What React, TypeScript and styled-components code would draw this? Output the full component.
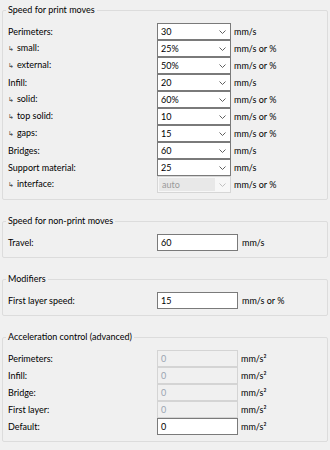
import React from "react";
import styled, { createGlobalStyle } from "styled-components";

const GlobalStyle = createGlobalStyle`
  html, body {
    margin: 0;
    padding: 0;
    background: #f0f0f0;
  }
  body {
    font-family: "Lato", "Noto Sans", sans-serif;
    font-size: 9px;
    color: #000;
  }
`;

const Page = styled.div`
  width: 330px;
  height: 450px;
  box-sizing: border-box;
  padding: 4px 2px 0 2px;
  display: flex;
  flex-direction: column;
  gap: 15px;
  overflow: hidden;
`;

const Group = styled.fieldset`
  margin: 0;
  border: 1px solid #dcdcdc;
  border-radius: 2px;
  padding: 7px 4px 6px 5px;
  min-width: 0;
`;

const Legend = styled.legend`
  font-size: 9px;
  line-height: 12px;
  height: 12px;
  padding: 0 2px;
  margin-left: -2px;
  color: #000;
`;

const Rows = styled.div`
  display: flex;
  flex-direction: column;
`;

const Row = styled.div`
  display: grid;
  grid-template-columns: 149px auto 1fr;
  align-items: center;
  height: 17px;
`;

const Label = styled.span`
  line-height: 12px;
  white-space: nowrap;
`;

const Sub = styled.span`
  font-family: "DejaVu Sans", sans-serif;
  font-size: 7px;
  color: #444;
  margin-right: 3px;
`;

const Combo = styled.div<{ $disabled?: boolean }>`
  box-sizing: border-box;
  width: 74px;
  height: 17px;
  border: 1px solid ${(p) => (p.$disabled ? "#d6d6d6" : "#7a7a7a")};
  background: ${(p) => (p.$disabled ? "#f7f7f7" : "#ffffff")};
  display: flex;
  align-items: stretch;
`;

const ComboText = styled.span<{ $disabled?: boolean }>`
  flex: 1;
  display: flex;
  align-items: center;
  padding-left: 3px;
  margin: ${(p) => (p.$disabled ? "1px 0 1px 1px" : "0")};
  background: ${(p) => (p.$disabled ? "#e8e8e8" : "transparent")};
  color: ${(p) => (p.$disabled ? "#9a9a9a" : "#000")};
`;

const ComboArrow = styled.span`
  width: 15px;
  display: flex;
  align-items: center;
  justify-content: center;
`;

const TextBox = styled.div<{ $disabled?: boolean }>`
  box-sizing: border-box;
  width: 81px;
  height: 17px;
  border: 1px solid ${(p) => (p.$disabled ? "#d4d4d4" : "#7a7a7a")};
  background: ${(p) => (p.$disabled ? "#f0f0f0" : "#ffffff")};
  color: ${(p) => (p.$disabled ? "#9aa4b0" : "#000")};
  display: flex;
  align-items: center;
  padding-left: 3px;
`;

const Unit = styled.span<{ $gap?: number }>`
  margin-left: ${(p) => p.$gap ?? 3}px;
  white-space: nowrap;
`;

const Chevron: React.FC<{ disabled?: boolean }> = ({ disabled }) => (
  <svg width="7" height="4" viewBox="0 0 7 4">
    <path
      d="M0.5 0.5 L3.5 3.5 L6.5 0.5"
      fill="none"
      stroke={disabled ? "#c0c0c0" : "#606060"}
      strokeWidth="1"
    />
  </svg>
);

type ComboRow = { label: string; sub?: boolean; value: string; unit: string; disabled?: boolean };

const printRows: ComboRow[] = [
  { label: "Perimeters:", value: "30", unit: "mm/s" },
  { label: "small:", sub: true, value: "25%", unit: "mm/s or %" },
  { label: "external:", sub: true, value: "50%", unit: "mm/s or %" },
  { label: "Infill:", value: "20", unit: "mm/s" },
  { label: "solid:", sub: true, value: "60%", unit: "mm/s or %" },
  { label: "top solid:", sub: true, value: "10", unit: "mm/s or %" },
  { label: "gaps:", sub: true, value: "15", unit: "mm/s or %" },
  { label: "Bridges:", value: "60", unit: "mm/s" },
  { label: "Support material:", value: "25", unit: "mm/s" },
  { label: "interface:", sub: true, value: "auto", unit: "mm/s or %", disabled: true },
];

const accelRows = [
  { label: "Perimeters:", disabled: true },
  { label: "Infill:", disabled: true },
  { label: "Bridge:", disabled: true },
  { label: "First layer:", disabled: true },
  { label: "Default:", disabled: false },
];

const RowLabel: React.FC<{ text: string; sub?: boolean }> = ({ text, sub }) => (
  <Label>
    {sub && <Sub>↳</Sub>}
    {text}
  </Label>
);

export default function App() {
  return (
    <>
      <GlobalStyle />
      <Page>
        <Group>
          <Legend>Speed for print moves</Legend>
          <Rows>
            {printRows.map((r) => (
              <Row key={r.label + r.value}>
                <RowLabel text={r.label} sub={r.sub} />
                <Combo $disabled={r.disabled}>
                  <ComboText $disabled={r.disabled}>{r.value}</ComboText>
                  <ComboArrow>
                    <Chevron disabled={r.disabled} />
                  </ComboArrow>
                </Combo>
                <Unit>{r.unit}</Unit>
              </Row>
            ))}
          </Rows>
        </Group>

        <Group>
          <Legend>Speed for non-print moves</Legend>
          <Rows>
            <Row>
              <RowLabel text="Travel:" />
              <TextBox>60</TextBox>
              <Unit $gap={4}>mm/s</Unit>
            </Row>
          </Rows>
        </Group>

        <Group>
          <Legend>Modifiers</Legend>
          <Rows>
            <Row>
              <RowLabel text="First layer speed:" />
              <TextBox>15</TextBox>
              <Unit $gap={4}>mm/s or %</Unit>
            </Row>
          </Rows>
        </Group>

        <Group>
          <Legend>Acceleration control (advanced)</Legend>
          <Rows>
            {accelRows.map((r) => (
              <Row key={r.label}>
                <RowLabel text={r.label} />
                <TextBox $disabled={r.disabled}>0</TextBox>
                <Unit $gap={3}>mm/s²</Unit>
              </Row>
            ))}
          </Rows>
        </Group>
      </Page>
    </>
  );
}
